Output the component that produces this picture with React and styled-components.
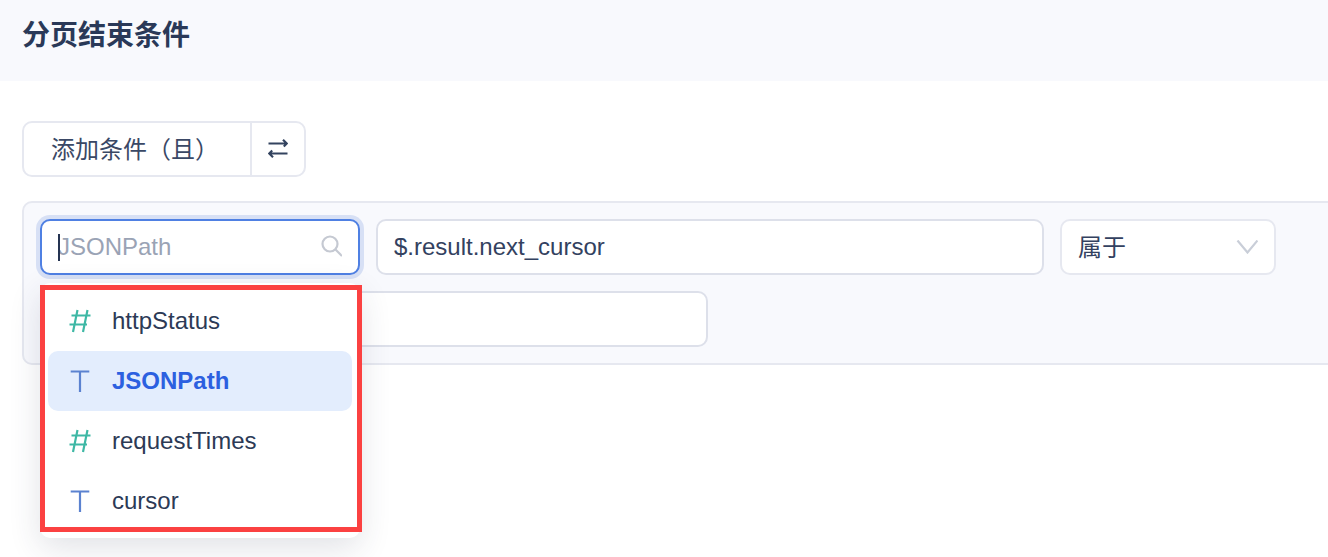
import React from "react";
import styled, { createGlobalStyle } from "styled-components";

const Global = createGlobalStyle`
  html, body { margin: 0; padding: 0; background: #fff; }
  body { width: 1328px; height: 557px; overflow: hidden; font-family: "Liberation Sans", "Noto Sans CJK SC", sans-serif; color: #2c3a56; }
  * { box-sizing: border-box; }
`;

const Page = styled.div`
  width: 1328px;
  height: 557px;
  overflow: hidden;
`;
const Header = styled.header`
  height: 81px;
  background: #f8f9fd;
  padding: 13px 22px 0;
`;
const Title = styled.h1`
  margin: 0;
  font-size: 28px;
  line-height: 40px;
  font-weight: 700;
  color: #2a3958;
  font-family: "Noto Sans CJK SC", sans-serif;
`;
const Body = styled.main`
  padding: 40px 0 0 22px;
`;
const ButtonGroup = styled.div`
  display: flex;
  width: 284px;
  height: 56px;
  border: 2px solid #e6e8f0;
  border-radius: 10px;
  background: #fff;
`;
const MainButton = styled.div`
  flex: none;
  width: 228px;
  padding-left: 27px;
  border-right: 2px solid #e6e8f0;
  font-size: 24px;
  line-height: 50px;
  color: #3a4865;
  font-family: "Noto Sans CJK SC", sans-serif;
`;
const IconButton = styled.div`
  flex: 1;
  display: flex;
  align-items: center;
  justify-content: center;
`;
const Panel = styled.section`
  display: flex;
  flex-wrap: wrap;
  gap: 16px;
  align-content: flex-start;
  width: 1340px;
  height: 164px;
  margin-top: 24px;
  padding: 16px;
  background: #f8f9fd;
  border: 2px solid #e6e8f0;
  border-radius: 10px;
`;
const Field = styled.div`
  position: relative;
  flex: none;
  width: ${(p) => p.$width}px;
  height: 56px;
  display: flex;
  align-items: center;
  justify-content: space-between;
  padding: 0 16px;
  background: #fff;
  border: 2px solid ${(p) => (p.$focused ? "#4f80e3" : p.$soft ? "#e6e8f0" : "#dde0ea")};
  border-radius: 10px;
  font-size: 24px;
  color: #334160;
  ${(p) => p.$focused && "box-shadow: 0 0 0 4px #d7e0f5;"}
`;
const Combo = styled.div`
  position: relative;
  flex: none;
`;
const Placeholder = styled.span`
  color: #9aa3b5;
`;
const Caret = styled.i`
  position: absolute;
  left: 16px;
  top: 13px;
  width: 2px;
  height: 27px;
  background: #253452;
`;
const CjkValue = styled.span`
  font-family: "Noto Sans CJK SC", sans-serif;
  padding-bottom: 4px;
`;
const Dropdown = styled.div`
  position: absolute;
  z-index: 2;
  left: 0;
  top: 64px;
  width: 320px;
  padding: 8px;
  height: 255px;
  background: #fff;
  border-radius: 10px;
  box-shadow: 0 10px 32px rgba(40, 50, 80, 0.14);
`;
const Option = styled.div`
  display: flex;
  align-items: center;
  height: 60px;
  padding-left: 20px;
  gap: 20px;
  border-radius: 10px;
  font-size: 24px;
  color: ${(p) => (p.$active ? "#2c60e0" : "#2c3a56")};
  font-weight: ${(p) => (p.$active ? 700 : 400)};
  background: ${(p) => (p.$active ? "#e3edfd" : "transparent")};
`;
const Annotation = styled.div`
  position: absolute;
  z-index: 3;
  left: 0;
  top: 66px;
  width: 322px;
  height: 247px;
  border: 5px solid #fb4141;
  pointer-events: none;
`;

const Swap = () => (
  <svg width="20" height="20" viewBox="0 0 20 20" fill="none" stroke="#33435f" strokeWidth="2.2">
    <path d="M0.5 4.5h18M15 0.8L18.8 4.5L15.8 7.5M19.5 14.5h-18M5 18.2L1.2 14.5L4.2 11.5" />
  </svg>
);
const Search = () => (
  <svg width="24" height="24" viewBox="0 0 24 24" fill="none" stroke="#c5c9d2" strokeWidth="2.2">
    <circle cx="12" cy="9" r="7.5" />
    <path d="M17.5 14.5L24 21" />
  </svg>
);
const Chevron = () => (
  <svg width="22" height="14" viewBox="0 0 22 14" fill="none" stroke="#c9ced8" strokeWidth="2.2">
    <path d="M1.5 0.5L11.5 12.5L21.5 0.5" />
  </svg>
);
const Hash = () => (
  <svg width="24" height="24" viewBox="0 0 24 24" fill="none" stroke="#3eb8a5" strokeWidth="2.2" style={{ flex: "none" }}>
    <path d="M9.5 1L5 23M19.5 1L15 23M3.5 6.5h19M1.5 15.5h17.5" />
  </svg>
);
const Text = () => (
  <svg width="24" height="24" viewBox="0 0 24 24" fill="none" stroke="#5b82d0" strokeWidth="2.2" style={{ flex: "none" }}>
    <path d="M2.7 2.5h18.6M12 2.5v20.5" />
  </svg>
);

const options = [
  { name: "httpStatus", icon: <Hash /> },
  { name: "JSONPath", icon: <Text />, active: true },
  { name: "requestTimes", icon: <Hash /> },
  { name: "cursor", icon: <Text /> },
];

export default function App() {
  return (
    <Page>
      <Global />
      <Header>
        <Title>分页结束条件</Title>
      </Header>
      <Body>
        <ButtonGroup>
          <MainButton>添加条件（且）</MainButton>
          <IconButton>
            <Swap />
          </IconButton>
        </ButtonGroup>
        <Panel>
          <Combo>
            <Field $width={320} $focused>
              <Placeholder>JSONPath</Placeholder>
              <Caret />
              <Search />
            </Field>
            <Dropdown>
              {options.map((o) => (
                <Option key={o.name} $active={o.active}>
                  {o.icon}
                  <span>{o.name}</span>
                </Option>
              ))}
            </Dropdown>
            <Annotation />
          </Combo>
          <Field $width={668}>$.result.next_cursor</Field>
          <Field $width={216} $soft>
            <CjkValue>属于</CjkValue>
            <Chevron />
          </Field>
          <Field $width={668} />
        </Panel>
      </Body>
    </Page>
  );
}
